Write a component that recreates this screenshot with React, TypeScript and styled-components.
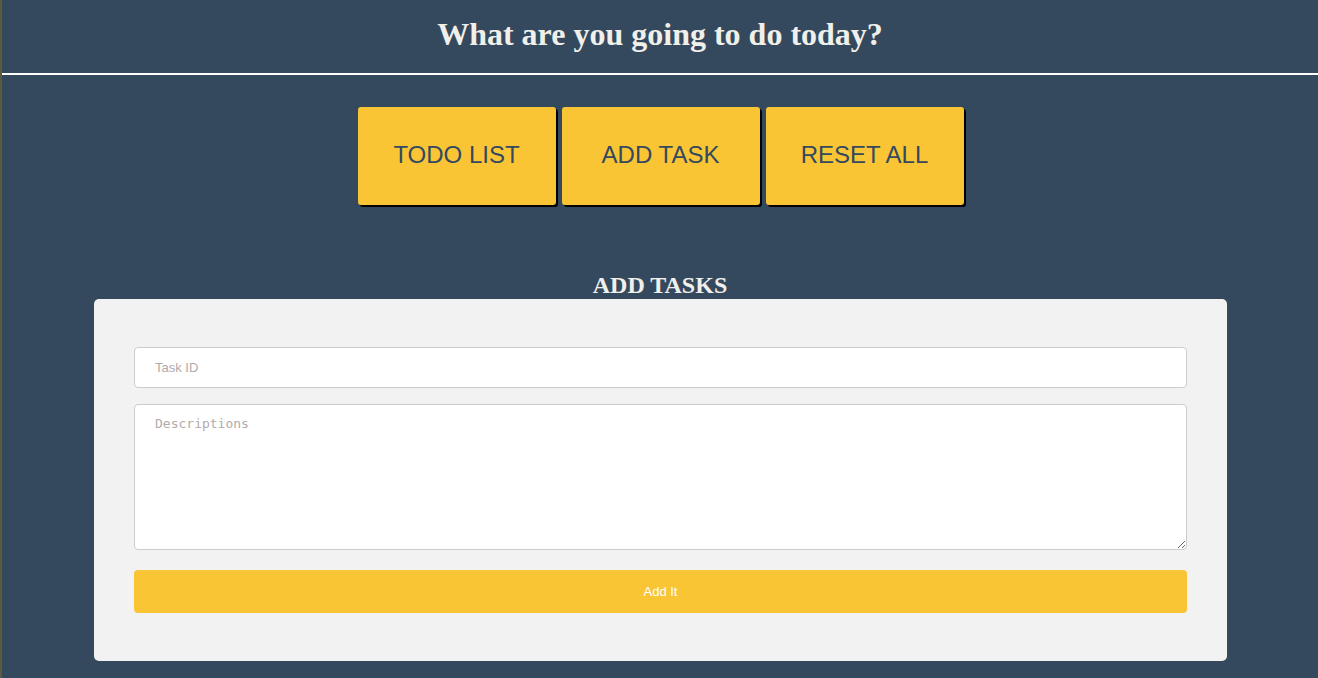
import React from "react";
import styled, { createGlobalStyle } from "styled-components";

const GlobalStyle = createGlobalStyle`
  html, body {
    margin: 0;
    padding: 0;
    background: #34495e;
  }
  body {
    border-left: 2px solid #5d5a3c;
    min-height: 678px;
    box-sizing: border-box;
    font-family: "Liberation Serif", "Times New Roman", serif;
  }
`;

const Page = styled.div`
  display: flex;
  flex-direction: column;
  align-items: center;
  min-height: 678px;
  background: #34495e;
`;

const Header = styled.header`
  align-self: stretch;
  height: 73px;
  display: flex;
  align-items: center;
  justify-content: center;
  border-bottom: 2px solid #ffffff;
`;

const Title = styled.h1`
  margin: 0;
  font-family: "Liberation Serif", "Times New Roman", serif;
  font-weight: bold;
  font-size: 32px;
  color: #f1efea;
  padding-bottom: 5px;
`;

const Nav = styled.nav`
  display: flex;
  gap: 6px;
  margin-top: 32px;
  margin-left: 1px;
`;

const NavButton = styled.button`
  width: 198px;
  height: 98px;
  background: #f9c535;
  border: none;
  border-radius: 3px;
  box-shadow: 2px 2px 0 #000000;
  font-family: "Liberation Sans", Arial, sans-serif;
  font-size: 24px;
  color: #34495e;
  cursor: pointer;
  padding: 0 0 2px 0;
`;

const SectionTitle = styled.h2`
  margin: 67px 0 0 0;
  font-family: "Liberation Serif", "Times New Roman", serif;
  font-weight: bold;
  font-size: 24px;
  line-height: 27px;
  color: #f1efea;
`;

const Card = styled.form`
  width: 1133px;
  box-sizing: border-box;
  margin-left: 1px;
  background: #f2f2f2;
  border-radius: 5px;
  padding: 48px 40px 48px 40px;
  display: flex;
  flex-direction: column;
`;

const TextInput = styled.input`
  height: 41px;
  box-sizing: border-box;
  border: 1px solid #cccccc;
  border-radius: 4px;
  background: #ffffff;
  padding: 0 20px;
  font-family: "Liberation Sans", Arial, sans-serif;
  font-size: 13px;
  outline: none;
  &::placeholder {
    color: #b3aaaa;
  }
`;

const TextArea = styled.textarea`
  margin-top: 16px;
  height: 146px;
  box-sizing: border-box;
  border: 1px solid #cccccc;
  border-radius: 4px;
  background: #ffffff;
  padding: 11px 20px;
  font-family: "DejaVu Sans Mono", monospace;
  font-size: 13px;
  outline: none;
  resize: vertical;
  &::placeholder {
    color: #b3aaaa;
  }
`;

const SubmitButton = styled.button`
  margin-top: 20px;
  height: 43px;
  border: none;
  border-radius: 4px;
  background: #f9c535;
  color: #ffffff;
  font-family: "Liberation Sans", Arial, sans-serif;
  font-size: 13px;
  cursor: pointer;
`;

export default function App() {
  return (
    <>
      <GlobalStyle />
      <Page>
        <Header>
          <Title>What are you going to do today?</Title>
        </Header>
        <Nav>
          <NavButton>TODO LIST</NavButton>
          <NavButton>ADD TASK</NavButton>
          <NavButton>RESET ALL</NavButton>
        </Nav>
        <SectionTitle>ADD TASKS</SectionTitle>
        <Card onSubmit={(e) => e.preventDefault()}>
          <TextInput placeholder="Task ID" />
          <TextArea placeholder="Descriptions" />
          <SubmitButton type="submit">Add It</SubmitButton>
        </Card>
      </Page>
    </>
  );
}
